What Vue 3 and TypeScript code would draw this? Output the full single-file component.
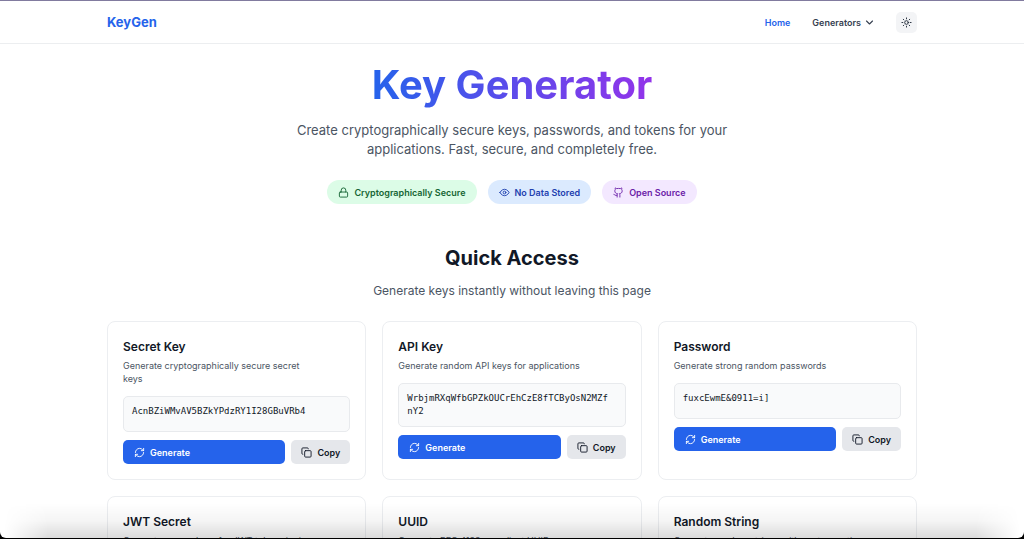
<script setup lang="ts">
interface KeyCard {
  id: string
  title: string
  description: string
  value: string
}

const cards: KeyCard[] = [
  { id: 'secret', title: 'Secret Key', description: 'Generate cryptographically secure secret keys', value: 'AcnBZiWMvAV5BZkYPdzRY1I28GBuVRb4' },
  { id: 'api', title: 'API Key', description: 'Generate random API keys for applications', value: 'WrbjmRXqWfbGPZkOUCrEhCzE8fTCByOsN2MZfnY2' },
  { id: 'password', title: 'Password', description: 'Generate strong random passwords', value: 'fuxcEwmE&0911=i]' },
  { id: 'jwt', title: 'JWT Secret', description: 'Generate secure keys for JWT token signing', value: '' },
  { id: 'uuid', title: 'UUID', description: 'Generate RFC 4122 compliant UUIDs', value: '' },
  { id: 'random', title: 'Random String', description: 'Generate random strings with custom options', value: '' },
]
</script>

<template>
  <div class="page">
    <header class="header">
      <div class="container bar">
        <a class="brand" href="#">KeyGen</a>
        <nav class="nav">
          <a class="link active" href="#">Home</a>
          <button class="link menu" type="button">
            Generators
            <svg class="chevron" viewBox="0 0 24 24"><path d="m4 8 8 8 8-8" /></svg>
          </button>
          <button class="theme" type="button" aria-label="Toggle theme">
            <svg class="icon" viewBox="0 0 24 24">
              <circle cx="12" cy="12" r="4" />
              <path d="M12 2v2M12 20v2M4.93 4.93l1.41 1.41M17.66 17.66l1.41 1.41M2 12h2M20 12h2M6.34 17.66l-1.41 1.41M19.07 4.93l-1.41 1.41" />
            </svg>
          </button>
        </nav>
      </div>
    </header>

    <main class="container">
      <section class="hero">
        <h1><span>Key Generator</span></h1>
        <p class="lead">Create cryptographically secure keys, passwords, and tokens for your applications. Fast, secure, and completely free.</p>
        <div class="badges">
          <span class="badge green">
            <svg class="icon" viewBox="0 0 24 24"><rect x="3" y="11" width="18" height="11" rx="2" /><path d="M7 11V7a5 5 0 0 1 10 0v4" /></svg>
            Cryptographically Secure
          </span>
          <span class="badge blue">
            <svg class="icon" viewBox="0 0 24 24"><path d="M2 12s3.5-7 10-7 10 7 10 7-3.5 7-10 7-10-7-10-7Z" /><circle cx="12" cy="12" r="3" /></svg>
            No Data Stored
          </span>
          <span class="badge purple">
            <svg class="icon" viewBox="0 0 24 24"><path d="M15 22v-4a4.8 4.8 0 0 0-1-3.5c3 0 6-2 6-5.5.08-1.25-.27-2.48-1-3.5.28-1.15.28-2.35 0-3.5 0 0-1 0-3 1.5-2.64-.5-5.36-.5-8 0C6 2 5 2 5 2c-.3 1.15-.3 2.35 0 3.5A5.4 5.4 0 0 0 4 9c0 3.5 3 5.5 6 5.5-.39.49-.68 1.05-.85 1.65S8.93 17.38 9 18v4" /><path d="M9 18c-4.51 2-5-2-7-2" /></svg>
            Open Source
          </span>
        </div>
      </section>

      <section class="quick">
        <h2>Quick Access</h2>
        <p class="sub">Generate keys instantly without leaving this page</p>
        <div class="grid">
          <article v-for="card in cards" :key="card.id" class="card">
            <h3>{{ card.title }}</h3>
            <p class="desc">{{ card.description }}</p>
            <output class="value">{{ card.value }}</output>
            <div class="actions">
              <button class="btn primary" type="button">
                <svg class="icon" viewBox="0 0 24 24"><path d="M3 12a9 9 0 0 1 9-9 9.75 9.75 0 0 1 6.74 2.74L21 8" /><path d="M21 3v5h-5" /><path d="M21 12a9 9 0 0 1-9 9 9.75 9.75 0 0 1-6.74-2.74L3 16" /><path d="M8 16H3v5" /></svg>
                Generate
              </button>
              <button class="btn secondary" type="button">
                <svg class="icon" viewBox="0 0 24 24"><rect x="8" y="8" width="14" height="14" rx="2" /><path d="M4 16a2 2 0 0 1-2-2V4a2 2 0 0 1 2-2h10a2 2 0 0 1 2 2" /></svg>
                Copy
              </button>
            </div>
          </article>
        </div>
      </section>
    </main>
    <div class="window-edge" aria-hidden="true"><div class="shade"></div></div>
  </div>
</template>

<style>
body {
  margin: 0;
  background: #fff;
}
</style>

<style scoped>
* {
  box-sizing: border-box;
}
.page {
  position: relative;
  height: 100vh;
  overflow: hidden;
  border-top: 1px solid #817b9f;
  background: #fff;
  color: #111827;
  font-family: Inter, "Liberation Sans", sans-serif;
}
h1, h2, h3, p {
  margin: 0;
}
button {
  font: inherit;
  border: 0;
  cursor: pointer;
}
a {
  text-decoration: none;
}
.container {
  width: 100%;
  max-width: 842px;
  margin: 0 auto;
  padding: 0 16px;
}
.header {
  border-bottom: 1px solid #eceef0;
}
.bar {
  display: flex;
  align-items: center;
  justify-content: space-between;
  height: 42px;
}
.brand {
  font-size: 13px;
  font-weight: 700;
  color: #2563eb;
}
.nav {
  display: flex;
  align-items: center;
  font-size: 9px;
  font-weight: 600;
}
.link {
  color: #374151;
}
.link.active {
  color: #2563eb;
}
.menu {
  display: flex;
  align-items: center;
  gap: 4px;
  margin: 0 22px;
  padding: 0;
  background: none;
}
.icon, .chevron {
  flex: none;
  width: 11px;
  height: 11px;
  fill: none;
  stroke: currentColor;
  stroke-width: 2;
  stroke-linecap: round;
  stroke-linejoin: round;
}
.chevron {
  width: 9px;
  height: 9px;
  stroke-width: 3;
}
.theme {
  display: grid;
  place-items: center;
  width: 21px;
  height: 21px;
  padding: 0;
  border-radius: 5px;
  background: #f3f4f6;
  color: #1f2937;
}
.hero {
  display: flex;
  flex-direction: column;
  align-items: center;
  padding-top: 21px;
  text-align: center;
}
h1 {
  font-size: 40px;
  font-weight: 700;
  line-height: 40px;
}
h1 span {
  display: block;
  padding-bottom: 4px;
  background: linear-gradient(to right, #2563eb, #9333ea);
  -webkit-background-clip: text;
  background-clip: text;
  color: transparent;
}
.lead {
  max-width: 450px;
  margin-top: 12px;
  font-size: 13px;
  line-height: 19px;
  color: #4b5563;
}
.badges {
  display: flex;
  gap: 11px;
  margin-top: 21px;
}
.badge {
  display: flex;
  align-items: center;
  gap: 5px;
  height: 24px;
  padding: 0 11px;
  border-radius: 12px;
  font-size: 9px;
  font-weight: 600;
}
.green {
  background: #dcfce7;
  color: #166534;
}
.blue {
  background: #dbeafe;
  color: #1e40af;
}
.purple {
  background: #f3e8ff;
  color: #6b21a8;
}
.quick {
  padding-top: 42px;
}
h2 {
  font-size: 20px;
  font-weight: 700;
  line-height: 24px;
  text-align: center;
}
.sub {
  margin-top: 13px;
  font-size: 12px;
  line-height: 16px;
  text-align: center;
  color: #4b5563;
}
.grid {
  display: grid;
  grid-template-columns: repeat(3, minmax(0, 1fr));
  gap: 16px;
  margin-top: 22px;
}
.card {
  padding: 16px 15px 15px;
  border: 1px solid #eceef1;
  border-radius: 8px;
}
h3 {
  font-size: 12px;
  font-weight: 600;
  line-height: 18px;
}
.desc {
  margin-top: 3px;
  padding-right: 32px;
  font-size: 9px;
  line-height: 13px;
  color: #4b5563;
}
.value {
  display: block;
  min-height: 36px;
  margin-top: 11px;
  padding: 8px 16px 8px 8px;
  border: 1px solid #e8eaed;
  border-radius: 5px;
  background: #f9fafb;
  font-family: "DejaVu Sans Mono", "Liberation Mono", monospace;
  font-size: 9px;
  line-height: 13px;
  word-break: break-all;
}
.actions {
  display: flex;
  gap: 6px;
  margin-top: 8px;
}
.btn {
  display: flex;
  align-items: center;
  gap: 5px;
  height: 24px;
  padding: 0 11px;
  border-radius: 5px;
  font-size: 9px;
  font-weight: 600;
}
.primary {
  flex: 1;
  background: #2563eb;
  color: #fff;
}
.secondary {
  padding: 0 10px;
  background: #e5e7eb;
  color: #111827;
}
.window-edge {
  position: absolute;
  inset: auto 0 0;
  height: 36px;
  overflow: hidden;
  border-bottom: 1px solid #000;
  pointer-events: none;
}
.shade {
  height: 100%;
  border-radius: 0 0 6px 6px;
  box-shadow: 0 0 0 8px #000;
  clip-path: inset(0);
}
.shade::before {
  content: "";
  display: block;
  height: 100%;
  background: linear-gradient(to bottom, rgba(0, 0, 0, 0), rgba(0, 0, 0, 0.04) 50%, rgba(0, 0, 0, 0.14));
  -webkit-mask-image: linear-gradient(to right, transparent 4px, #000 48px, #000 calc(100% - 48px), transparent calc(100% - 4px));
  mask-image: linear-gradient(to right, transparent 4px, #000 48px, #000 calc(100% - 48px), transparent calc(100% - 4px));
}
</style>
